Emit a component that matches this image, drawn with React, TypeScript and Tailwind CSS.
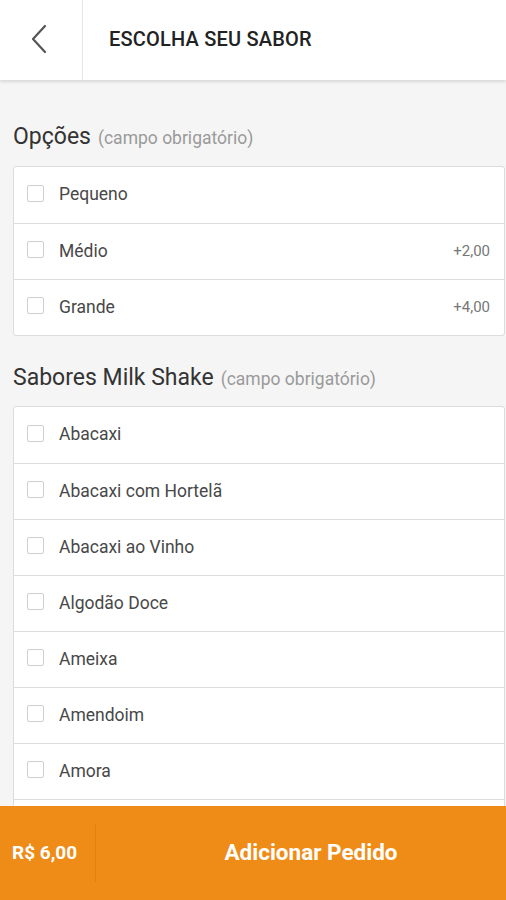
import React from 'react';

type Option = { label: string; price?: string };

const sizes: Option[] = [
  { label: 'Pequeno' },
  { label: 'Médio', price: '+2,00' },
  { label: 'Grande', price: '+4,00' },
];

const flavors: Option[] = [
  { label: 'Abacaxi' },
  { label: 'Abacaxi com Hortelã' },
  { label: 'Abacaxi ao Vinho' },
  { label: 'Algodão Doce' },
  { label: 'Ameixa' },
  { label: 'Amendoim' },
  { label: 'Amora' },
  { label: 'Banana' },
  { label: 'Baunilha' },
];

function OptionList({ items }: { items: Option[] }) {
  return (
    <div className="ml-[13px] mr-[1px] bg-white border border-[#dcdcdc] rounded-[3px]">
      {items.map((item, i) => (
        <label
          key={item.label}
          className={`flex items-center h-[56px] pl-[13px] pr-[14px] ${i > 0 ? 'border-t border-[#dcdcdc]' : ''}`}
        >
          <span className="w-[17px] h-[17px] border border-[#cfcfcf] rounded-[2px] mb-[4px] shrink-0" />
          <span className="ml-[15px] text-[17.5px] text-[#484848] mb-[1px]">{item.label}</span>
          {item.price && <span className="ml-auto text-[15px] text-[#777]">{item.price}</span>}
        </label>
      ))}
    </div>
  );
}

function SectionTitle({ title }: { title: string }) {
  return (
    <div className="pl-[13px] h-[28px] flex items-baseline">
      <span className="text-[23px] text-[#333] leading-[28px]">{title}</span>
      <span className="ml-[7px] text-[17.5px] text-[#9a9a9a]">(campo obrigatório)</span>
    </div>
  );
}

export default function App() {
  return (
    <div className="min-h-screen bg-[#f5f5f5] font-['Roboto',sans-serif] pb-[110px]">
      <header className="h-[80px] bg-white flex shadow-[0_2px_3px_rgba(0,0,0,0.12)] relative z-10">
        <button className="w-[83px] flex items-center justify-center border-r border-[#e6e6e6]">
          <svg width="18" height="30" viewBox="0 0 18 30" className="mb-[2px] ml-[-4px]">
            <path d="M15 2 L3 15 L15 28" fill="none" stroke="#555" strokeWidth="2.2" strokeLinecap="round" strokeLinejoin="round" />
          </svg>
        </button>
        <div className="flex items-center pl-[26px] pb-[3px]">
          <h1 className="text-[20px] font-medium text-[#222] tracking-[0.2px]">ESCOLHA SEU SABOR</h1>
        </div>
      </header>

      <main className="pt-[43px]">
        <SectionTitle title="Opções" />
        <div className="h-[15px]" />
        <OptionList items={sizes} />
        <div className="h-[28px]" />
        <SectionTitle title="Sabores Milk Shake" />
        <div className="h-[14px]" />
        <OptionList items={flavors} />
      </main>

      <footer className="fixed left-0 right-0 bottom-0 h-[94px] bg-[#ef8b17] flex items-center">
        <div className="w-[96px] h-[58px] flex items-center pl-[12px] border-r border-[#e0800f]">
          <span className="text-[19px] font-bold text-white">R$ 6,00</span>
        </div>
        <button className="flex-1 text-center text-[22.5px] font-bold text-white pl-[20px]">Adicionar Pedido</button>
      </footer>
    </div>
  );
}
